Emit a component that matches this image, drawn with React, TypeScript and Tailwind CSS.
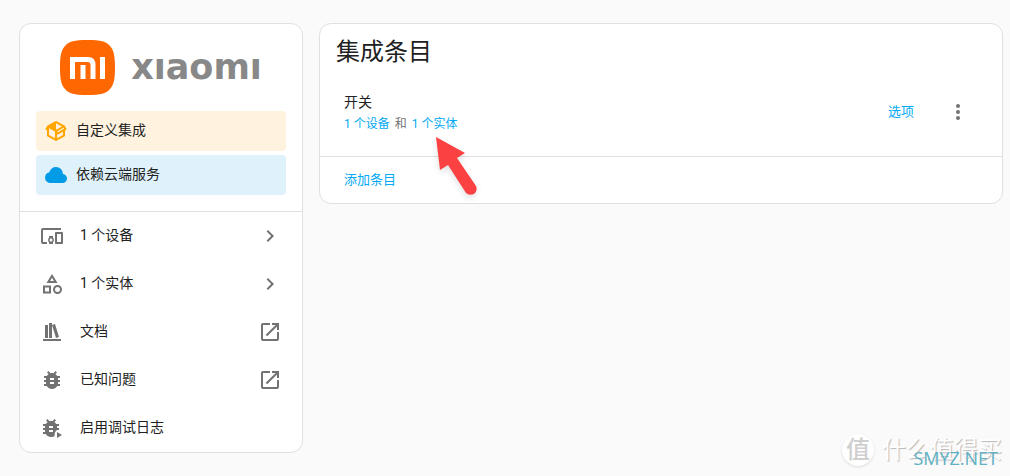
import React from "react";

const icons = {
  devices:
    "M3 6H21V4H3C1.9 4 1 4.9 1 6V18C1 19.1 1.9 20 3 20H7V18H3V6M13 12H9V13.78C8.39 14.33 8 15.11 8 16C8 16.89 8.39 17.67 9 18.22V20H13V18.22C13.61 17.67 14 16.88 14 16S13.61 14.33 13 13.78V12M11 17.5C10.17 17.5 9.5 16.83 9.5 16S10.17 14.5 11 14.5 12.5 15.17 12.5 16 11.83 17.5 11 17.5M22 8H16C15.5 8 15 8.5 15 9V19C15 19.5 15.5 20 16 20H22C22.5 20 23 19.5 23 19V9C23 8.5 22.5 8 22 8M21 18H17V10H21V18Z",
  shape:
    "M11,13.5V21.5H3V13.5H11M9,15.5H5V19.5H9V15.5M12,2L17.5,11H6.5L12,2M12,5.86L10.08,9H13.92L12,5.86M17.5,13C20,13 22,15 22,17.5C22,20 20,22 17.5,22C15,22 13,20 13,17.5C13,15 15,13 17.5,13M17.5,15A2.5,2.5 0 0,0 15,17.5A2.5,2.5 0 0,0 17.5,20A2.5,2.5 0 0,0 20,17.5A2.5,2.5 0 0,0 17.5,15Z",
  bookshelf: "M9 3V18H12V3H9M12 5L16 18L19 17L15 4L12 5M5 5V18H8V5H5M3 19V21H21V19H3Z",
  bug: "M14,12H10V10H14M14,16H10V14H14M20,8H17.19C16.74,7.22 16.12,6.55 15.37,6.04L17,4.41L15.59,3L13.42,5.17C12.96,5.06 12.5,5 12,5C11.5,5 11.04,5.06 10.59,5.17L8.41,3L7,4.41L8.62,6.04C7.88,6.55 7.26,7.22 6.81,8H4V10H6.09C6.04,10.33 6,10.66 6,11V12H4V14H6V15C6,15.34 6.04,15.67 6.09,16H4V18H6.81C7.85,19.79 9.78,21 12,21C14.22,21 16.15,19.79 17.19,18H20V16H17.91C17.96,15.67 18,15.34 18,15V14H20V12H18V11C18,10.66 17.96,10.33 17.91,10H20V8Z",
  bugPlay:
    "M13,10H9V12H13V10M13,14H9V16H13V14M19,8V10H16.91C16.96,10.33 17,10.66 17,11V12H19V14H17C15.5,15 14.3,17 14.6,20.2C13.5,20.8 12.3,21 11,21C8.78,21 6.85,19.79 5.81,18H3V16H5.09C5.04,15.67 5,15.34 5,15V14H3V12H5V11C5,10.66 5.04,10.33 5.09,10H3V8H5.81C6.26,7.22 6.88,6.55 7.62,6.04L6,4.41L7.41,3L9.59,5.17C10.04,5.06 10.5,5 11,5C11.5,5 11.96,5.06 12.42,5.17L14.59,3L16,4.41L14.37,6.04C15.12,6.55 15.74,7.22 16.19,8H19M17,16V22L22,19L17,16Z",
  package:
    "M2,10.96C1.5,10.68 1.35,10.07 1.63,9.59L3.13,7C3.24,6.8 3.41,6.66 3.6,6.58L11.43,2.18C11.59,2.06 11.79,2 12,2C12.21,2 12.41,2.06 12.57,2.18L20.47,6.62C20.66,6.72 20.82,6.88 20.91,7.08L22.36,9.6C22.64,10.08 22.47,10.69 22,10.96L21,11.54V16.5C21,16.88 20.79,17.21 20.47,17.38L12.57,21.82C12.41,21.94 12.21,22 12,22C11.79,22 11.59,21.94 11.43,21.82L3.53,17.38C3.21,17.21 3,16.88 3,16.5V10.96C2.7,11.13 2.32,11.14 2,10.96M12,4.15V4.15L12,10.85V10.85L17.96,7.5L12,4.15M5,15.91L11,19.29V12.58L5,9.21V15.91M19,15.91V12.69L14,15.59C13.67,15.77 13.3,15.76 13,15.6V19.29L19,15.91M13.85,13.36L20.13,9.73L19.55,8.72L13.27,12.35L13.85,13.36Z",
  cloud:
    "M6.5 20Q4.22 20 2.61 18.43 1 16.85 1 14.58 1 12.63 2.17 11.1 3.35 9.57 5.25 9.15 5.88 6.85 7.75 5.43 9.63 4 12 4 14.93 4 16.96 6.04 19 8.07 19 11 20.73 11.2 21.86 12.5 23 13.78 23 15.5 23 17.38 21.69 18.69 20.38 20 18.5 20Z",
  chevron: "M8.59,16.58L13.17,12L8.59,7.41L10,6L16,12L10,18L8.59,16.58Z",
  open: "M14,3V5H17.59L7.76,14.83L9.17,16.24L19,6.41V10H21V3M19,19H5V5H12V3H5C3.89,3 3,3.9 3,5V19A2,2 0 0,0 5,21H19A2,2 0 0,0 21,19V12H19V19Z",
  dots: "M12,16A2,2 0 0,1 14,18A2,2 0 0,1 12,20A2,2 0 0,1 10,18A2,2 0 0,1 12,16M12,10A2,2 0 0,1 14,12A2,2 0 0,1 12,14A2,2 0 0,1 10,12A2,2 0 0,1 12,10M12,4A2,2 0 0,1 14,6A2,2 0 0,1 12,8A2,2 0 0,1 10,6A2,2 0 0,1 12,4Z",
};

type IconName = keyof typeof icons;

function Icon({ name, className = "" }: { name: IconName; className?: string }) {
  return (
    <svg viewBox="0 0 24 24" className={`size-6 shrink-0 fill-current ${className}`} aria-hidden="true">
      <path fillRule="evenodd" d={icons[name]} />
    </svg>
  );
}

function Logo() {
  return (
    <div className="flex items-center justify-center gap-4">
      <svg viewBox="0 0 55 55" className="size-[55px] shrink-0" aria-hidden="true">
        <path
          fill="#ff6700"
          d="M27.500 0C41 0 46 1.500 49.500 5.500C53.500 9 55 15 55 27.500C55 40 53.500 46 49.500 49.500C46 53.500 41 55 27.500 55C14 55 9 53.500 5.500 49.500C1.500 46 0 40 0 27.500C0 15 1.500 9 5.500 5.500C9 1.500 14 0 27.500 0Z"
        />
        <path fill="none" stroke="#fff" strokeWidth="5" d="M12.500 39V19.500H28Q33 19.500 33 25V39M23 25V39M42.500 17V39" />
      </svg>
      <span className="pb-0.5 font-['DejaVu_Sans'] text-[35px] leading-10 font-bold text-[#888]" aria-label="xiaomi">
        xıaomı
      </span>
    </div>
  );
}

const rows: { icon: IconName; label: string; end?: IconName }[] = [
  { icon: "devices", label: "1 个设备", end: "chevron" },
  { icon: "shape", label: "1 个实体", end: "chevron" },
  { icon: "bookshelf", label: "文档", end: "open" },
  { icon: "bug", label: "已知问题", end: "open" },
  { icon: "bugPlay", label: "启用调试日志" },
];

export default function App() {
  return (
    <div className="relative flex min-h-screen items-start gap-4 bg-[#fafafa] pt-[23px] pr-[7px] pl-[19px] font-[Roboto,'Noto_Sans_CJK_SC',sans-serif] text-sm text-[#212121]">
      <aside className="w-[284px] shrink-0 rounded-xl border border-[#e0e0e0] bg-white">
        <div className="flex flex-col gap-1 p-4">
          <div className="pb-3">
            <Logo />
          </div>
          <div className="flex h-10 items-center gap-2 rounded bg-[#fff3e0] px-2">
            <Icon name="package" className="text-[#ffa600]" />
            <span className="pb-0.5">自定义集成</span>
          </div>
          <div className="flex h-10 items-center gap-2 rounded bg-[#dff2fb] px-2">
            <Icon name="cloud" className="text-[#039be5]" />
            <span className="pb-0.5">依赖云端服务</span>
          </div>
        </div>
        <nav className="border-t border-[#e0e0e0]">
          {rows.map((row) => (
            <a key={row.label} href="#" className="flex h-12 items-center px-5">
              <Icon name={row.icon} className="text-[#727272]" />
              <span className="ml-4 flex-1 pb-0.5">{row.label}</span>
              {row.end && <Icon name={row.end} className="text-[#727272]" />}
            </a>
          ))}
        </nav>
      </aside>

      <main className="min-w-0 flex-1 rounded-xl border border-[#e0e0e0] bg-white">
        <h1 className="px-4 pt-2 text-2xl leading-10">集成条目</h1>
        <div className="flex items-center pt-4 pr-8 pb-5 pl-6">
          <div className="flex-1 pt-1">
            <div className="leading-5">开关</div>
            <div className="relative w-fit text-xs leading-6 text-[#727272]">
              <a href="#" className="text-[#03a9f4]">1 个设备</a>
              <span className="mx-0.5"> 和 </span>
              <a href="#" className="text-[#03a9f4]">1 个实体</a>
              <svg
                viewBox="0 0 60 70"
                className="absolute top-4 left-20 h-[70px] w-[60px] drop-shadow-md"
                aria-hidden="true"
              >
                <path fill="#fb4141" d="M12 9L41 25L33 30L52 58Q54 63 50 66Q45 68 42 65L24 37L16 42Z" />
              </svg>
            </div>
          </div>
          <button className="text-[13px] text-[#03a9f4]">选项</button>
          <button className="ml-8 text-[#727272]" aria-label="菜单">
            <Icon name="dots" />
          </button>
        </div>
        <div className="border-t border-[#e0e0e0] px-6 py-3">
          <button className="text-[13px] leading-[22px] text-[#03a9f4]">添加条目</button>
        </div>
      </main>

      <div className="absolute right-2 bottom-2.5 flex items-center gap-2 text-2xl">
        <span className="flex size-8 items-center justify-center rounded-full bg-white font-medium text-[#cfcfcf] shadow">
          值
        </span>
        <span className="text-white [text-shadow:1px_1px_1px_#b8b8b8]">什么值得买</span>
      </div>
      <span className="absolute right-3 bottom-1 font-['Open_Sans'] text-lg text-[#5fb0c4]">SMYZ.NET</span>
    </div>
  );
}
